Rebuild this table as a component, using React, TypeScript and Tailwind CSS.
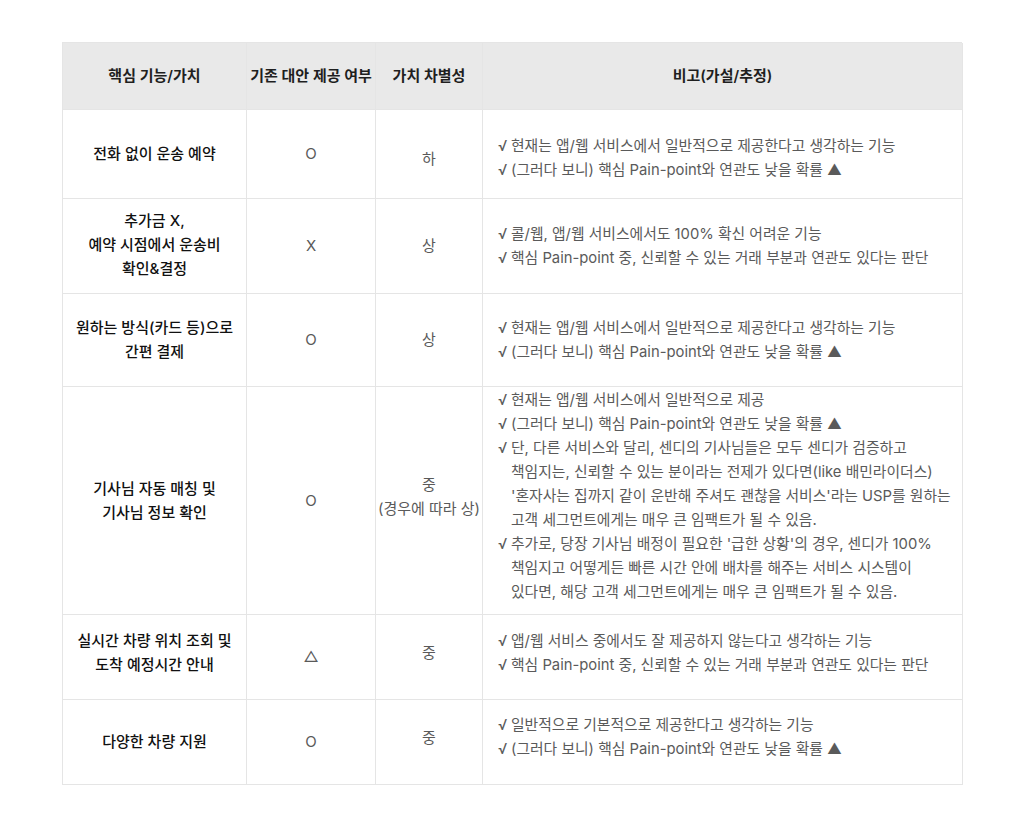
const font = { fontFamily: '"Inter", "Noto Sans CJK KR", sans-serif' };

type Row = {
  h: string;
  title: string[];
  titlePad?: string;
  alt: string;
  altPad?: string;
  value: string[];
  valuePad?: string;
  notes: string[][];
  notesPad?: string;
};

const rows: Row[] = [
  {
    h: "h-[89px]",
    title: ["전화 없이 운송 예약"],
    alt: "O",
    value: ["하"],
    valuePad: "pt-[9px]",
    notes: [
      ["현재는 앱/웹 서비스에서 일반적으로 제공한다고 생각하는 기능"],
      ["(그러다 보니) 핵심 Pain-point와 연관도 낮을 확률 ▲"],
    ],
    notesPad: "pt-[7px]",
  },
  {
    h: "h-[95px]",
    title: ["추가금 X,", "예약 시점에서 운송비", "확인&결정"],
    titlePad: "pb-[2px]",
    alt: "X",
    value: ["상"],
    notes: [
      ["콜/웹, 앱/웹 서비스에서도 100% 확신 어려운 기능"],
      ["핵심 Pain-point 중, 신뢰할 수 있는 거래 부분과 연관도 있다는 판단"],
    ],
  },
  {
    h: "h-[93px]",
    title: ["원하는 방식(카드 등)으로", "간편 결제"],
    alt: "O",
    value: ["상"],
    notes: [
      ["현재는 앱/웹 서비스에서 일반적으로 제공한다고 생각하는 기능"],
      ["(그러다 보니) 핵심 Pain-point와 연관도 낮을 확률 ▲"],
    ],
  },
  {
    h: "h-[228px]",
    title: ["기사님 자동 매칭 및", "기사님 정보 확인"],
    alt: "O",
    value: ["중", "(경우에 따라 상)"],
    valuePad: "pb-[8px]",
    notes: [
      ["현재는 앱/웹 서비스에서 일반적으로 제공"],
      ["(그러다 보니) 핵심 Pain-point와 연관도 낮을 확률 ▲"],
      [
        "단, 다른 서비스와 달리, 센디의 기사님들은 모두 센디가 검증하고",
        "책임지는, 신뢰할 수 있는 분이라는 전제가 있다면(like 배민라이더스)",
        "'혼자사는 집까지 같이 운반해 주셔도 괜찮을 서비스'라는 USP를 원하는",
        "고객 세그먼트에게는 매우 큰 임팩트가 될 수 있음.",
      ],
      [
        "추가로, 당장 기사님 배정이 필요한 '급한 상황'의 경우, 센디가 100%",
        "책임지고 어떻게든 빠른 시간 안에 배차를 해주는 서비스 시스템이",
        "있다면, 해당 고객 세그먼트에게는 매우 큰 임팩트가 될 수 있음.",
      ],
    ],
    notesPad: "pb-[10px]",
  },
  {
    h: "h-[85px]",
    title: ["실시간 차량 위치 조회 및", "도착 예정시간 안내"],
    titlePad: "pb-[8px]",
    alt: "△",
    value: ["중"],
    valuePad: "pb-[9px]",
    notes: [
      ["앱/웹 서비스 중에서도 잘 제공하지 않는다고 생각하는 기능"],
      ["핵심 Pain-point 중, 신뢰할 수 있는 거래 부분과 연관도 있다는 판단"],
    ],
    notesPad: "pb-[9px]",
  },
  {
    h: "h-[85px]",
    title: ["다양한 차량 지원"],
    alt: "O",
    value: ["중"],
    valuePad: "pb-[9px]",
    notes: [
      ["일반적으로 기본적으로 제공한다고 생각하는 기능"],
      ["(그러다 보니) 핵심 Pain-point와 연관도 낮을 확률 ▲"],
    ],
    notesPad: "pb-[11px]",
  },
];

const cols = "grid grid-cols-[184px_129px_107px_480px]";
const cell = "border-r border-b border-[#e5e5e5] flex items-center";

export default function App() {
  return (
    <div className="min-h-screen bg-white pt-[42px]" style={font}>
      <div className="mx-auto w-[900px] border-l border-t border-[#e5e5e5] text-[15px] leading-[24px]">
        {/* header */}
        <div className={`${cols} h-[67px] bg-[#e9e9e9] font-semibold text-[#1f1f1f]`}>
          <div className={`${cell} justify-center`}>핵심 기능/가치</div>
          <div className={`${cell} justify-center whitespace-nowrap`}>기존 대안 제공 여부</div>
          <div className={`${cell} justify-center`}>가치 차별성</div>
          <div className={`${cell} justify-center`}>비고(가설/추정)</div>
        </div>

        {rows.map((r, i) => (
          <div key={i} className={`${cols} ${r.h}`}>
            <div className={`${cell} justify-center text-center font-medium text-[#111] ${r.titlePad ?? ""}`}>
              <div>
                {r.title.map((t) => (
                  <div key={t} className="whitespace-nowrap">{t}</div>
                ))}
              </div>
            </div>
            <div className={`${cell} justify-center text-[#5a5a5a]`}>{r.alt}</div>
            <div className={`${cell} justify-center text-center text-[#5a5a5a] ${r.valuePad ?? ""}`}>
              <div>
                {r.value.map((t) => (
                  <div key={t} className="whitespace-nowrap">{t}</div>
                ))}
              </div>
            </div>
            <div className={`${cell} px-[15px] text-[14.8px] text-[#5a5a5a] ${r.notesPad ?? ""}`}>
              <div>
                {r.notes.map((lines, j) => (
                  <div key={j} className="flex">
                    <span className="w-[13px] shrink-0">√</span>
                    <div>
                      {lines.map((l) => (
                        <div key={l} className="whitespace-nowrap">{l}</div>
                      ))}
                    </div>
                  </div>
                ))}
              </div>
            </div>
          </div>
        ))}
      </div>
    </div>
  );
}
